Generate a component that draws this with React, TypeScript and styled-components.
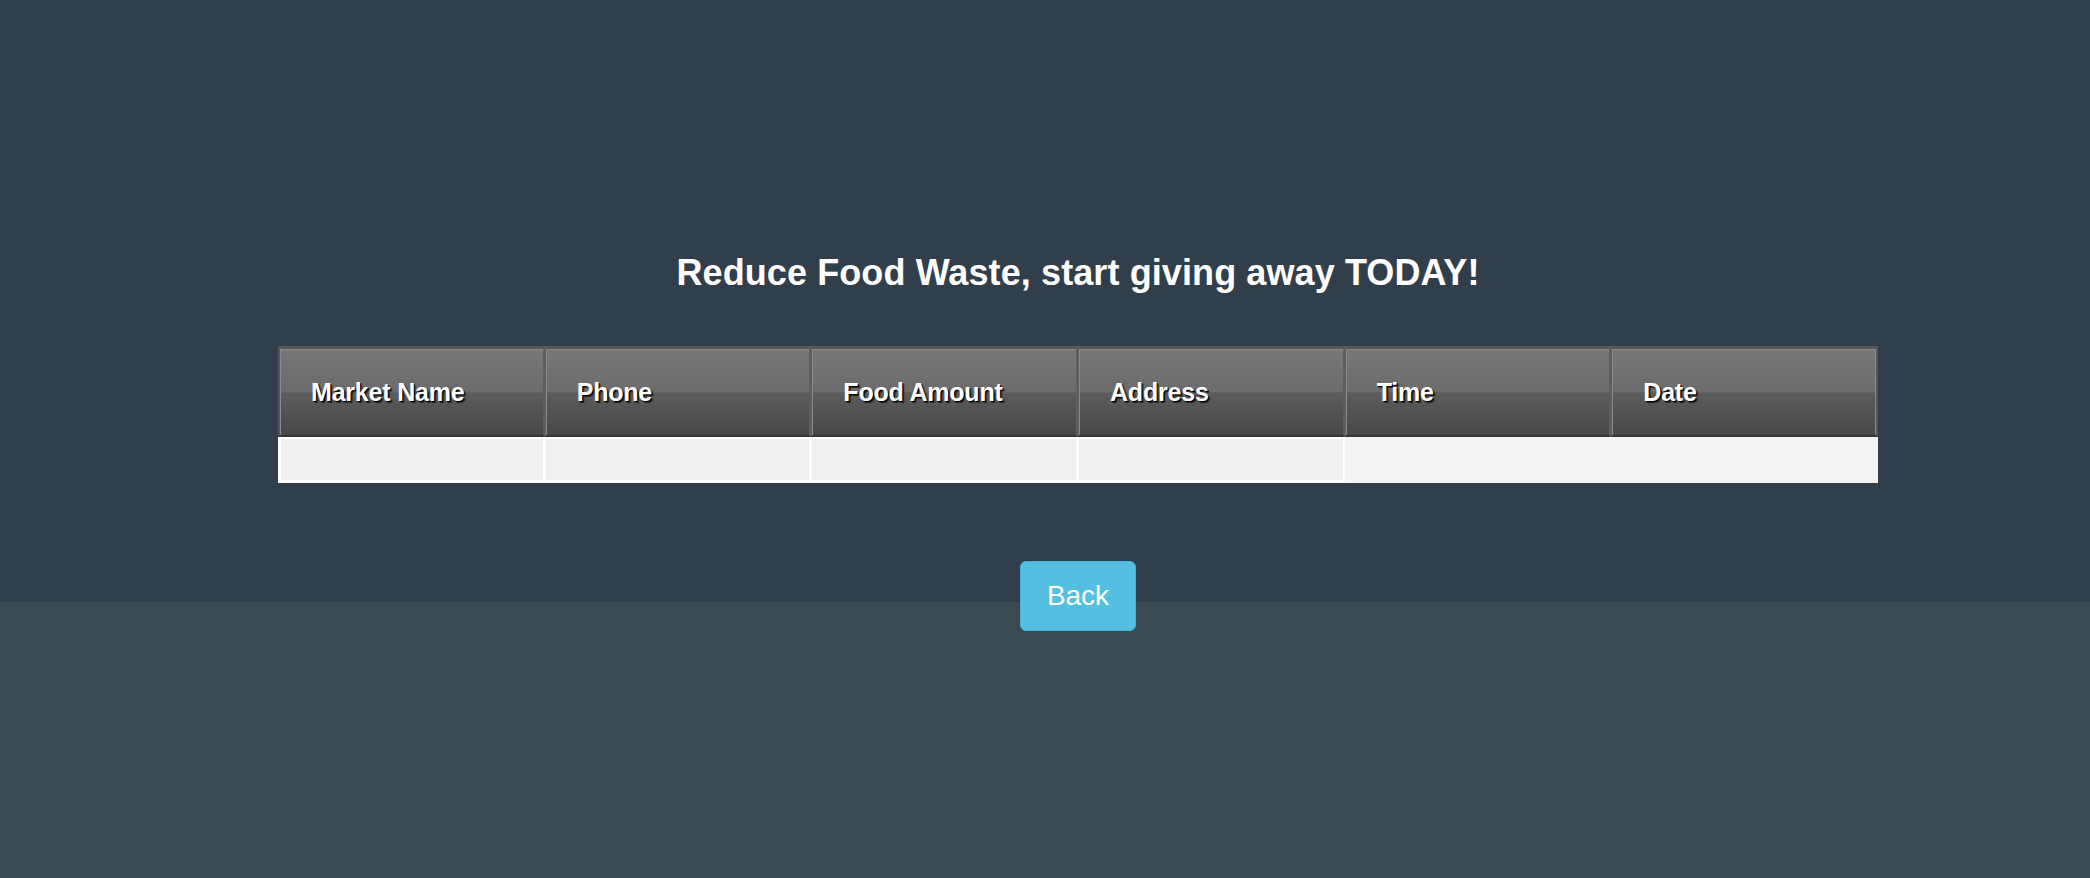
import React from 'react';
import styled, { createGlobalStyle } from 'styled-components';

const GlobalStyle = createGlobalStyle`
  html, body {
    margin: 0;
    padding: 0;
    height: 100%;
    background-color: #3a4a53;
    font-family: "Liberation Sans", Arial, Helvetica, sans-serif;
  }
  #root {
    min-height: 100%;
  }
`;

const Hero = styled.section`
  height: 602px;
  background-color: #313e4b;
  padding: 252px 212px 0 278px;
  box-sizing: border-box;
  display: flex;
  flex-direction: column;
  align-items: center;
`;

const Title = styled.h1`
  margin: 0;
  color: #ffffff;
  font-size: 36px;
  line-height: 42px;
  font-weight: 700;
  letter-spacing: 0.1px;
  text-align: center;
`;

const Table = styled.table`
  width: 1600px;
  margin-top: 52px;
  table-layout: fixed;
  border-collapse: separate;
  border-spacing: 0;
  background-color: #f4f4f4;
`;

const HeadCell = styled.th`
  height: 91px;
  padding: 0 0 0 31px;
  box-sizing: border-box;
  text-align: left;
  color: #ffffff;
  font-size: 25px;
  font-weight: 700;
  letter-spacing: -0.2px;
  text-shadow: 1px 1px 0 #000, 2px 2px 1px rgba(0, 0, 0, 0.6);
  background: linear-gradient(
    to bottom,
    #787878 0%,
    #6b6b6b 50%,
    #5c5c5c 51%,
    #474747 100%
  );
  border-top: 3px solid #8a8a8a;
  border-top-color: #575757;
  box-shadow: inset 1px 1px 0 #8a8a8a;
  border-left: 1px solid #5e5e5e;
  border-right: 2px solid #5e5e5e;
  border-bottom: 2px solid #363636;

  &:first-child {
    border-left: 2px solid #565656;
  }

  &:last-child {
    border-right: 2px solid #565656;
    box-shadow: inset 1px 1px 0 #8a8a8a, inset -1px 0 0 #8a8a8a;
  }
`;

const BodyCell = styled.td`
  height: 46px;
  box-sizing: border-box;
  padding: 0;
  background-color: #f0f0f0;
  border: 2px solid #ffffff;
  border-bottom-width: 3px;
  border-left-width: 1px;

  &:first-child {
    border-left-width: 3px;
  }
`;

const BackButton = styled.button`
  margin-top: 78px;
  padding: 18px 26px;
  font-family: "Liberation Sans", Arial, Helvetica, sans-serif;
  font-size: 28px;
  line-height: 32px;
  color: #ffffff;
  background-color: #55bfe1;
  border: 1px solid #46b2d6;
  border-radius: 6px;
  cursor: pointer;
`;

const columns = ['Market Name', 'Phone', 'Food Amount', 'Address', 'Time', 'Date'];

const App = () => {
  return (
    <>
      <GlobalStyle />
      <Hero>
        <Title>Reduce Food Waste, start giving away TODAY!</Title>
        <Table>
          <thead>
            <tr>
              {columns.map((c) => (
                <HeadCell key={c}>{c}</HeadCell>
              ))}
            </tr>
          </thead>
          <tbody>
            <tr>
              <BodyCell />
              <BodyCell />
              <BodyCell />
              <BodyCell />
            </tr>
          </tbody>
        </Table>
        <BackButton>Back</BackButton>
      </Hero>
    </>
  );
};

export default App;
